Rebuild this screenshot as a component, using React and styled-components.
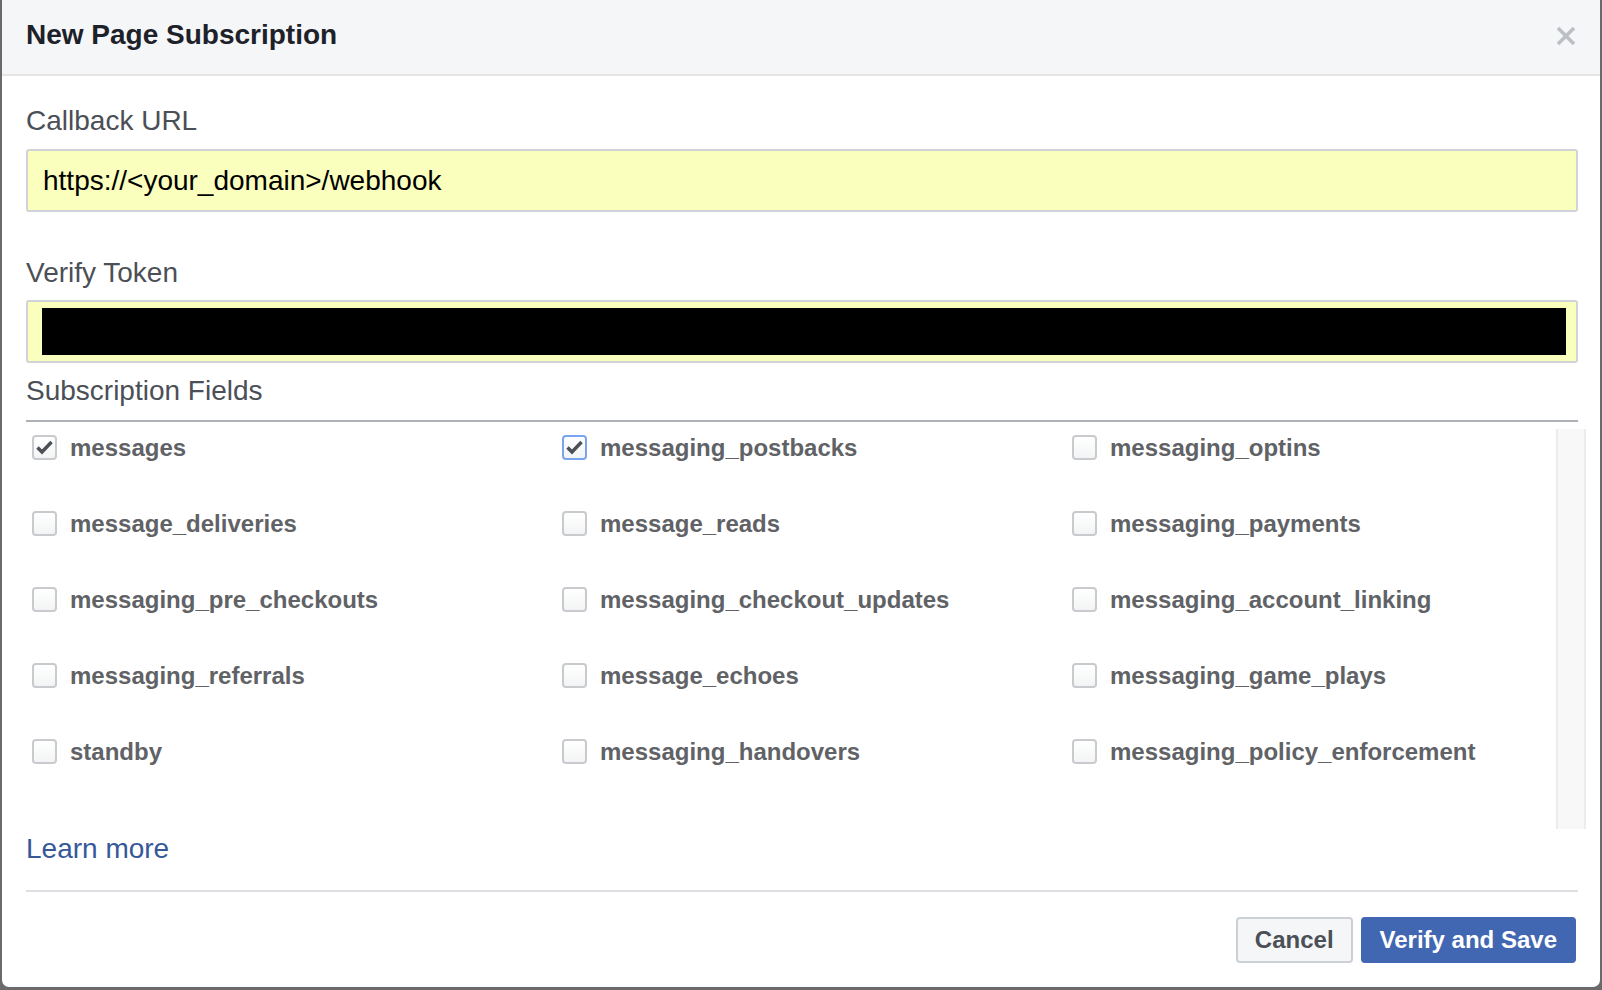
import React from "react";
import styled, { createGlobalStyle } from "styled-components";

const Global = createGlobalStyle`
  html, body { margin: 0; padding: 0; }
  body {
    background: #6a6a6a;
    font-family: "Liberation Sans", Arial, Helvetica, sans-serif;
    width: 1602px;
    height: 990px;
    overflow: hidden;
  }
`;

const Dialog = styled.div`
  margin-left: 2px;
  width: 1598px;
  height: 987px;
  background: #fff;
  border-radius: 0 0 7px 7px;
  display: flex;
  flex-direction: column;
  box-sizing: border-box;
  overflow: hidden;
`;

const Header = styled.div`
  height: 76px;
  box-sizing: border-box;
  padding: 19px 24px 23px 24px;
  background: #f5f6f7;
  border-bottom: 2px solid #e5e5e5;
  display: flex;
  align-items: center;
  justify-content: space-between;
  flex-shrink: 0;
`;

const Title = styled.h1`
  margin: 0;
  font-size: 28px;
  line-height: 32px;
  font-weight: bold;
  color: #1d2129;
`;

const CloseButton = styled.button`
  border: 0;
  background: none;
  padding: 0;
  width: 20px;
  height: 20px;
  display: flex;
  margin-top: 2px;
  cursor: pointer;
`;

const Body = styled.div`
  padding: 29px 22px 0 24px;
  display: flex;
  flex-direction: column;
`;

const Label = styled.div`
  font-size: 28px;
  line-height: 32px;
  color: #4b4f56;
  margin-top: ${(p) => p.$top || 0}px;
`;

const InputBox = styled.div`
  margin-top: ${(p) => p.$top || 12}px;
  height: 63px;
  box-sizing: border-box;
  border: 2px solid #d0d3d8;
  border-radius: 3px;
  background: #faffbd;
  display: flex;
  align-items: center;
  padding: 0 15px;
  font-size: 28px;
  color: #000;
`;

const Redacted = styled.div`
  flex: 1;
  height: 47px;
  margin: 0 -5px 0 -1px;
  background: #000;
`;

const SectionLabel = styled(Label)`
  padding-bottom: 13px;
  border-bottom: 2px solid #adb0b5;
`;

const ScrollArea = styled.div`
  margin-top: 7px;
  margin-right: -8px;
  height: 400px;
  display: flex;
`;

const FieldGrid = styled.div`
  flex: 1;
  padding: 6px 0 0 6px;
  display: grid;
  grid-template-columns: 530px 510px 1fr;
  grid-auto-rows: 25px;
  row-gap: 51px;
  align-content: start;
`;

const Track = styled.div`
  width: 30px;
  box-sizing: border-box;
  background: #f8f8f8;
  border-left: 2px solid #ececec;
  border-right: 2px solid #ececec;
`;

const Field = styled.label`
  display: flex;
  align-items: center;
  gap: 13px;
  font-size: 24px;
  line-height: 25px;
  font-weight: bold;
  color: #606266;
  white-space: nowrap;
`;

const Box = styled.span`
  width: 25px;
  height: 25px;
  box-sizing: border-box;
  border-radius: 4px;
  border: 2px solid ${(p) => (p.$focus ? "#7aa5ee" : "#c8cacd")};
  background: linear-gradient(#ffffff, #f3f4f5);
  display: flex;
  align-items: center;
  justify-content: center;
  flex-shrink: 0;
`;

const LearnMore = styled.a`
  margin-top: 4px;
  font-size: 28px;
  line-height: 32px;
  color: #365899;
  text-decoration: none;
  align-self: flex-start;
`;

const Divider = styled.div`
  margin-top: 25px;
  height: 2px;
  background: #dddfe2;
`;

const Footer = styled.div`
  padding: 25px 0 0 0;
  display: flex;
  justify-content: flex-end;
  gap: 8px;
  margin-right: 2px;
`;

const Button = styled.button`
  height: 46px;
  box-sizing: border-box;
  border-radius: 4px;
  font-family: inherit;
  font-size: 24px;
  font-weight: bold;
  padding: 0 17px;
  border: 2px solid ${(p) => (p.$primary ? "#4267b2" : "#ccd0d5")};
  background: ${(p) => (p.$primary ? "#4267b2" : "#f5f6f7")};
  color: ${(p) => (p.$primary ? "#fff" : "#4b4f56")};
  cursor: pointer;
`;

const fields = [
  ["messages", true, false],
  ["messaging_postbacks", true, true],
  ["messaging_optins", false, false],
  ["message_deliveries", false, false],
  ["message_reads", false, false],
  ["messaging_payments", false, false],
  ["messaging_pre_checkouts", false, false],
  ["messaging_checkout_updates", false, false],
  ["messaging_account_linking", false, false],
  ["messaging_referrals", false, false],
  ["message_echoes", false, false],
  ["messaging_game_plays", false, false],
  ["standby", false, false],
  ["messaging_handovers", false, false],
  ["messaging_policy_enforcement", false, false],
];

const Check = () => (
  <svg width="17" height="15" viewBox="0 0 17 15">
    <path d="M1.5 7.5 L6 12 L15.5 2" fill="none" stroke="#4b4f56" strokeWidth="3.4" strokeLinejoin="miter" />
  </svg>
);

export default function App() {
  return (
    <>
      <Global />
      <Dialog>
        <Header>
          <Title>New Page Subscription</Title>
          <CloseButton aria-label="Close">
            <svg width="20" height="20" viewBox="0 0 20 20">
              <path d="M2 2 L18 18 M18 2 L2 18" stroke="#bcc0c5" strokeWidth="3.6" />
            </svg>
          </CloseButton>
        </Header>
        <Body>
          <Label>Callback URL</Label>
          <InputBox $top={12}>https://&lt;your_domain&gt;/webhook</InputBox>
          <Label $top={45}>Verify Token</Label>
          <InputBox $top={11}>
            <Redacted />
          </InputBox>
          <SectionLabel $top={12}>Subscription Fields</SectionLabel>
          <ScrollArea>
            <FieldGrid>
              {fields.map(([name, checked, focus]) => (
                <Field key={name}>
                  <Box $focus={focus}>{checked && <Check />}</Box>
                  {name}
                </Field>
              ))}
            </FieldGrid>
            <Track />
          </ScrollArea>
          <LearnMore href="#">Learn more</LearnMore>
          <Divider />
          <Footer>
            <Button>Cancel</Button>
            <Button $primary>Verify and Save</Button>
          </Footer>
        </Body>
      </Dialog>
    </>
  );
}
